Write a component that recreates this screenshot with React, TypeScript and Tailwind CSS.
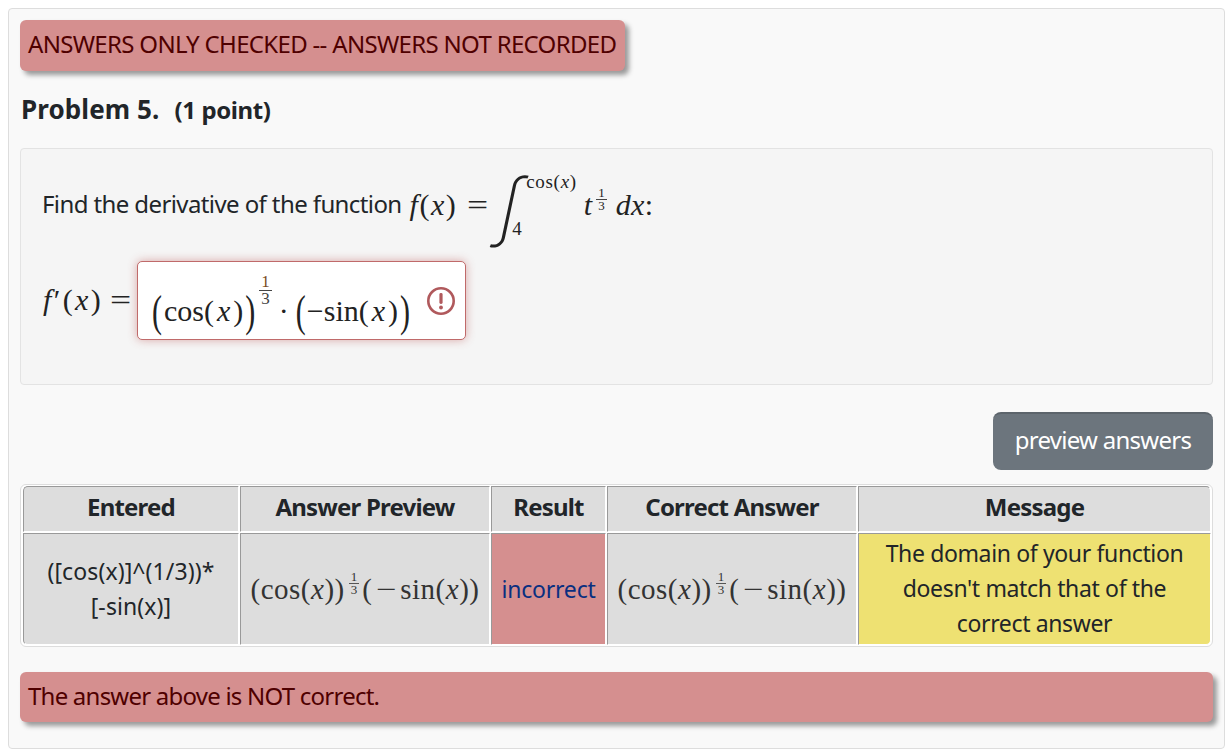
function CosExpr() {
  return (
    <span className="inline-flex items-center font-['Liberation_Serif',serif] text-[29px] leading-none text-[#333]">
      <span className="tracking-[0.5px] whitespace-nowrap">(cos(<i>x</i>))</span>
      <span className="inline-flex flex-col items-center text-[13px] leading-[12px] ml-[4px] mb-[12px] mr-[3px]">
        <span className="border-b border-[#555] px-[2px]">1</span>
        <span>3</span>
      </span>
      <span>(</span>
      <span className="mx-[6px] scale-x-125">−</span>
      <span className="tracking-[0.5px] whitespace-nowrap">sin(<i>x</i>))</span>
    </span>
  );
}

function Alert({ children, cls }: { children: React.ReactNode; cls: string }) {
  return (
    <div className={`flex items-center pl-[8px] pb-[3px] rounded-[6px] bg-[#d58f8f] text-[#4f0000] text-[24px] whitespace-nowrap shadow-[4px_4px_5px_#999] ${cls}`}>
      {children}
    </div>
  );
}

const th = "bg-[#dddddd] border-t border-l border-t-[#999] border-l-[#999] border-r border-b border-r-white border-b-white h-[46px] p-0 pb-1 text-center font-bold text-[24px] tracking-[-0.8px]";
const td = "bg-[#dddddd] border-t border-l border-t-[#999] border-l-[#999] border-r border-b border-r-white border-b-white p-0 text-center align-middle text-[23px] leading-[35px]";

export default function App() {
  return (
    <div className="font-['Noto_Sans',sans-serif] text-[#212529] bg-white h-[749px] pt-2 pl-2">
      <div className="w-[1217px] h-[741px] bg-[#f9f9f9] border border-[#dddddd] rounded-[4px] pt-[11px] px-[11px]">
        <Alert cls="w-[605px] h-[51px] tracking-[-0.68px]">ANSWERS ONLY CHECKED -- ANSWERS NOT RECORDED</Alert>

        <div className="mt-[19px] h-[36px] flex items-baseline font-bold">
          <span className="ml-[1px] text-[26px] tracking-[0.1px]">Problem 5.</span>
          <span className="ml-[15px] text-[24px] tracking-[-0.4px]">(1 point)</span>
        </div>

        <div className="mt-[22px] h-[237px] bg-[#f5f5f5] border border-[#e3e3e3] rounded-[4px] pl-[21px]">
          <div className="h-[103px] pt-[8px] flex items-center">
            <span className="text-[24px] tracking-[-0.6px] pb-[1px]">Find the derivative of the function</span>
            <span className="ml-[8px] font-['Liberation_Serif',serif] text-[30px] tracking-[1.5px] text-[#222] whitespace-nowrap"><i>f</i>(<i>x</i>)</span>
            <span className="ml-[12px] font-['Liberation_Serif',serif] text-[30px] text-[#222] scale-x-125">=</span>
            <span className="ml-[11px] font-['Liberation_Serif',serif] text-[#222] flex items-center">
              <span className="w-[29px] text-center font-['Inter',sans-serif] text-[72px] leading-none font-extralight -skew-x-12">∫</span>
              <span className="flex flex-col justify-between h-[66px] text-[19px] tracking-[0.7px] leading-none whitespace-nowrap">
                <span>cos(<i>x</i>)</span>
                <span className="-ml-[14px]">4</span>
              </span>
              <span className="ml-[7px] text-[30px] italic">t</span>
              <span className="inline-flex flex-col items-center text-[13px] leading-[12px] ml-[4px] mb-[10px]">
                <span className="border-b border-[#444] px-[2px]">1</span>
                <span>3</span>
              </span>
              <span className="ml-[9px] text-[30px] tracking-[0.4px]"><i>dx</i>:</span>
            </span>
          </div>

          <div className="mt-[9px] flex items-center">
            <span className="w-[94px] shrink-0 ml-[1px] font-['Liberation_Serif',serif] text-[30px] text-[#222] whitespace-nowrap flex items-center pb-[3px]">
              <span className="tracking-[2.4px]"><i>f</i>′(<i>x</i>)</span>
              <span className="ml-[9px] scale-x-125">=</span>
            </span>
            <div className="w-[329px] h-[79px] bg-white border border-[#c06a6a] rounded-[5px] shadow-[0_0_10px_rgba(185,74,72,0.45)] flex items-center pl-[14px] font-['Liberation_Serif',serif] text-[30px] text-[#222]">
              <span className="flex items-center mt-[20px] leading-none">
                <span className="scale-y-150 font-light">(</span>
                <span className="ml-[2px]">cos(<i className="mx-[3px]">x</i>)</span>
                <span className="ml-[2px] scale-y-150 font-light">)</span>
                <span className="mb-[40px] ml-[4px] inline-flex flex-col items-center text-[17px] leading-[16px] text-[#444]">
                  <span className="border-b border-[#444] px-[2px] text-[#7a4a1c]">1</span>
                  <span>3</span>
                </span>
                <span className="ml-[7px] mr-[7px]">·</span>
                <span className="scale-y-150 font-light">(</span>
                <span className="ml-[1px]">−sin(<i className="mx-[3px]">x</i>)</span>
                <span className="ml-[2px] scale-y-150 font-light">)</span>
              </span>
              <svg width="30" height="30" viewBox="0 0 30 30" className="ml-[16px]">
                <circle cx="15" cy="15" r="12.7" fill="none" stroke="#b0595c" strokeWidth="2.6" />
                <rect x="13.4" y="7" width="3.2" height="11" rx="1.4" fill="#b0595c" />
                <circle cx="15" cy="21.5" r="1.9" fill="#b0595c" />
              </svg>
            </div>
          </div>
        </div>

        <div className="mt-[27px] flex justify-end">
          <button className="w-[220px] h-[58px] pb-[5px] rounded-[8px] bg-[#6c757d] border-t-[2px] border-t-[#5c646b] text-white text-[24px] tracking-[-0.73px]">preview answers</button>
        </div>

        <div className="mt-[14px] h-[163px] bg-white border border-[#dddddd] rounded-[6px] pl-[1px] overflow-hidden">
          <table className="w-full h-full table-fixed border-separate border-spacing-[1px]">
            <colgroup>
              <col className="w-[216px]" />
              <col className="w-[250px]" />
              <col className="w-[115px]" />
              <col className="w-[250px]" />
              <col />
            </colgroup>
            <thead>
              <tr>
                <th className={`${th} rounded-tl-[5px]`}>Entered</th>
                <th className={th}>Answer Preview</th>
                <th className={th}>Result</th>
                <th className={th}>Correct Answer</th>
                <th className={`${th} rounded-tr-[5px]`}>Message</th>
              </tr>
            </thead>
            <tbody>
              <tr>
                <td className={`${td} rounded-bl-[5px] tracking-[0.1px]`}>([cos(x)]^(1/3))*<br />[-sin(x)]</td>
                <td className={td}><CosExpr /></td>
                <td className={`${td} !bg-[#d58f8f] text-[#0a2f80] tracking-[-0.2px]`}>incorrect</td>
                <td className={td}><CosExpr /></td>
                <td className={`${td} !bg-[#eee172] rounded-br-[5px] pb-[2px] tracking-[-0.36px]`}>The domain of your function<br />doesn't match that of the<br />correct answer</td>
              </tr>
            </tbody>
          </table>
        </div>

        <div className="mt-[25px]">
          <Alert cls="w-full h-[50px] tracking-[-0.77px]">The answer above is NOT correct.</Alert>
        </div>
      </div>
    </div>
  );
}
